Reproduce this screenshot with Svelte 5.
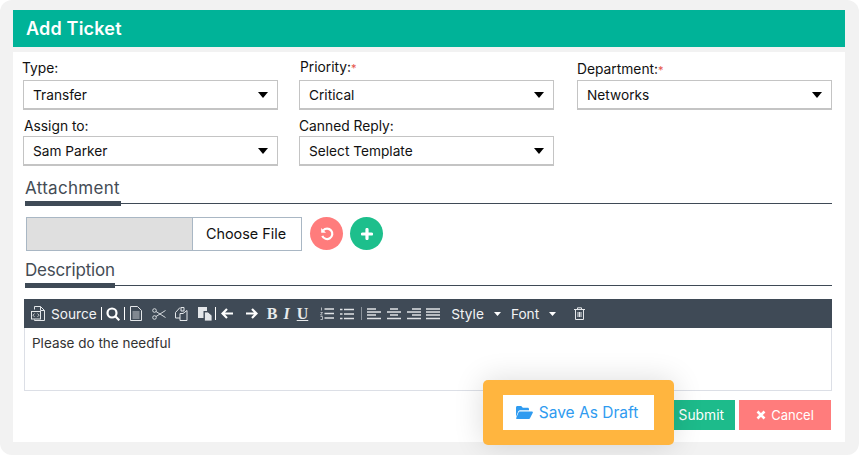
<script lang="ts">
  const topFields = [
    { label: 'Type:', value: 'Transfer', required: false },
    { label: 'Priority:', value: 'Critical', required: true },
    { label: 'Department:', value: 'Networks', required: true },
    { label: 'Assign to:', value: 'Sam Parker', required: false },
    { label: 'Canned Reply:', value: 'Select Template', required: false }
  ];
</script>

<div class="page">
  <div class="card">
    <div class="card-header">Add Ticket</div>
    <div class="card-body">
      <div class="fields">
        {#each topFields as field}
          <div class="field">
            <div class="field-label">{field.label}{#if field.required}<span class="req">*</span>{/if}</div>
            <div class="select">
              <span>{field.value}</span>
              <svg class="caret" width="10" height="6" viewBox="0 0 10 6"><path d="M0 0h10L5 6z" fill="#000" /></svg>
            </div>
          </div>
        {/each}
      </div>

      <div class="section-title first">Attachment<i style="width: 96px"></i></div>
      <div class="attach-row">
        <div class="file-input">
          <div class="file-name"></div>
          <div class="file-btn">Choose File</div>
        </div>
        <div class="round red">
          <svg width="16" height="16" viewBox="0 0 16 16" fill="none" stroke="#fff" stroke-width="2.2">
            <path d="M4.200 4.400a5.200 5.200 0 1 1-.9 5.400" />
            <path d="M2.200 2v4.800H7z" fill="#fff" stroke="none" />
          </svg>
        </div>
        <div class="round green">
          <svg width="12" height="12" viewBox="0 0 12 12"><path d="M6 1.500v9M1.500 6h9" stroke="#fff" stroke-width="3.200" stroke-linecap="round" /></svg>
        </div>
      </div>

      <div class="section-title second">Description<i style="width: 90px"></i></div>

      <div class="editor">
        <div class="toolbar">
          <svg width="14" height="15" viewBox="0 0 14 15" fill="none" stroke="#e4e7ea"><path d="M3.500 3.500v-3h6l4 4v10h-10v-1" /><path d="M9.500 .5v4h4" /><rect x=".5" y="5.500" width="9" height="7.500" /><path d="M3.500 7.500 2 9.200l1.500 1.700M6.500 7.500 8 9.200l-1.500 1.700" stroke-width=".8" /></svg>
          <span class="tb-text source">Source</span>
          <i class="sep"></i>
          <svg width="14" height="14" viewBox="0 0 14 14" fill="none" stroke="#fff" stroke-width="2.200"><circle cx="6" cy="6" r="4.500" /><path d="m9.300 9.300 4 4" /></svg>
          <i class="sep"></i>
          <svg class="doc" width="12" height="15" viewBox="0 0 12 15" fill="none" stroke="#e4e7ea"><path d="M.5.500h7l4 4v10H.5z" /><path d="M2.500 6h7M2.500 8h7M2.500 10h7M2.500 12h7" stroke-width=".8" /></svg>
          <svg class="cut" width="14" height="12" viewBox="0 0 14 12" fill="none" stroke="#d5d9dd"><circle cx="2.500" cy="2.500" r="1.800" /><circle cx="2.500" cy="9.500" r="1.800" /><path d="M4 3.500 13.500 9.500M4 8.500 13.500 2.500" /></svg>
          <svg class="copy" width="13" height="14" viewBox="0 0 13 14" fill="none" stroke="#e4e7ea"><path d="M6 .5h3v3.500H6zM.5 5.500 5 .5M.5 5.500V11H5" /><path d="M5 6.500h3l4-3v10H5z" /></svg>
          <svg class="paste" width="14" height="14" viewBox="0 0 14 14"><path d="M0 0h9v4H5.500v7H0z" fill="#e4e7ea" /><path d="M6.500 5H10l4 3.500V14H6.500z" fill="#e4e7ea" stroke="#3f4a56" stroke-width=".8" /></svg>
          <i class="sep tight"></i>
          <svg class="left" width="12" height="11" viewBox="0 0 12 11" fill="none" stroke="#fff" stroke-width="2.200"><path d="M6 1 1.500 5.500 6 10M2 5.500h10" /></svg>
          <svg class="right" width="12" height="11" viewBox="0 0 12 11" fill="none" stroke="#fff" stroke-width="2.200"><path d="m6 1 4.500 4.500L6 10M10 5.500H0" /></svg>
          <span class="fmt bold">B</span>
          <span class="fmt italic">I</span>
          <span class="fmt under">U</span>
          <svg class="ol" width="14" height="13" viewBox="0 0 14 13" fill="none" stroke="#dfe2e5"><path d="M4.500 2h9.500M4.500 6.500h9.500M4.500 11H14" stroke-width="1.500" /><path d="M1.500 .5v3M.5 5.500h2L.5 8h2M.5 9.500h2v3h-2" stroke-width=".7" /></svg>
          <svg class="ul" width="14" height="12" viewBox="0 0 14 12" fill="none" stroke="#dfe2e5" stroke-width="1.500"><path d="M4 1.500h10M4 6h10M4 10.500h10M0 1.500h2.500M0 6h2.500M0 10.500h2.500" /></svg>
          <i class="sep light"></i>
          <svg width="14" height="12" viewBox="0 0 14 12" stroke="#dfe2e5" stroke-width="1.500"><path d="M0 1h9M0 4h14M0 7h9M0 10.500h14" /></svg>
          <svg class="align" width="14" height="12" viewBox="0 0 14 12" stroke="#dfe2e5" stroke-width="1.500"><path d="M3 1h8M0 4h14M3 7h8M0 10.500h14" /></svg>
          <svg class="align" width="14" height="12" viewBox="0 0 14 12" stroke="#dfe2e5" stroke-width="1.500"><path d="M5 1h9M0 4h14M5 7h9M0 10.500h14" /></svg>
          <svg class="justify" width="14" height="12" viewBox="0 0 14 12" stroke="#dfe2e5" stroke-width="1.500"><path d="M0 1h14M0 4h14M0 7h14M0 10.500h14" /></svg>
          <span class="tb-text style">Style</span>
          <svg class="tb-caret" width="7" height="4" viewBox="0 0 7 4"><path d="M0 0h7L3.500 4z" fill="#fff" /></svg>
          <span class="tb-text font">Font</span>
          <svg class="tb-caret" width="7" height="4" viewBox="0 0 7 4"><path d="M0 0h7L3.500 4z" fill="#fff" /></svg>
          <svg class="trash" width="11" height="13" viewBox="0 0 11 13" fill="none" stroke="#e4e7ea"><path d="M0 2.500h11M3.500 2.500V.8h4v1.700M1.500 2.500V12.500h8V2.500M4 5v5M5.500 5v5M7 5v5" /></svg>
        </div>
        <div class="editor-body">Please do the needful</div>
      </div>

      <div class="actions">
        <div class="btn submit">Submit</div>
        <div class="btn cancel">
          <svg width="10" height="10" viewBox="0 0 10 10"><path d="m1.500 1.500 7 7M8.500 1.500l-7 7" stroke="#fff" stroke-width="2.600" /></svg>
          Cancel
        </div>
      </div>

      <div class="draft-highlight">
        <div class="draft-btn">
          <svg width="17" height="13" viewBox="0 0 17 13" fill="#2f9bf0"><path d="M0 11V1.500C0 .7.600 0 1.400 0h3.800l1.600 1.700h5c.7 0 1.200.6 1.200 1.300v1.200H4.200c-.8 0-1.500.4-1.900 1.100z" /><path d="M3.500 5.500H16c.7 0 1.100.7.800 1.300l-2.700 5.200c-.2.500-.7 1-1.300 1H.8c-.6 0-.9-.6-.6-1.100l2.300-5.300c.2-.6.500-1.100 1-1.100z" /></svg>
          Save As Draft
        </div>
      </div>
    </div>
  </div>
</div>

<style>
  :global(body) {
    margin: 0;
    background: #fff;
  }

  .page {
    box-sizing: border-box;
    width: 859px;
    height: 455px;
    padding: 10px 14px 13px 13px;
    background: #f2f2f2;
    border-radius: 12px;
    font-family: 'Inter', 'Open Sans', sans-serif;
    color: #111;
    overflow: hidden;
  }

  .card {
    height: 100%;
    display: flex;
    flex-direction: column;
  }

  .card-header {
    height: 37px;
    padding-left: 13px;
    background: #00b398;
    color: #fff;
    font-size: 18px;
    font-weight: 600;
    letter-spacing: 0.2px;
    line-height: 37px;
  }

  .card-body {
    position: relative;
    flex: 1;
    margin-top: 5px;
    padding: 0 13px 0 10px;
    background: #fff;
  }

  .fields {
    display: grid;
    grid-template-columns: 276px 278px 255px;
    padding-top: 2px;
  }

  .field {
    width: 255px;
    height: 56px;
    display: flex;
    flex-direction: column;
    justify-content: flex-end;
  }

  .field-label {
    font-size: 13.800px;
    line-height: 20px;
    margin-bottom: 2px;
    margin-left: -1px;
  }

  .field:nth-child(2) .field-label {
    margin-left: 1px;
  }

  .field:nth-child(3) .field-label {
    margin-bottom: 0;
    margin-left: 0;
  }

  .field:nth-child(4) .field-label {
    margin-bottom: 0;
    margin-left: 1px;
  }

  .field:nth-child(5) .field-label {
    margin-bottom: 0;
    margin-left: 0;
  }

  .req {
    color: #e5534b;
    font-size: 11px;
  }

  .select {
    box-sizing: border-box;
    height: 30px;
    display: flex;
    align-items: center;
    justify-content: space-between;
    padding: 0 9px;
    border: 1px solid #c4c4c4;
    border-bottom-width: 2px;
    font-size: 13.700px;
  }

  .section-title {
    position: relative;
    margin-left: 2px;
    height: 26px;
    line-height: 21px;
    border-bottom: 1px solid #3f4a56;
    font-size: 17px;
    color: #444c55;
    box-sizing: border-box;
  }

  .section-title.first {
    margin-top: 12px;
    letter-spacing: 0.3px;
  }

  .section-title.second {
    margin-top: 9px;
    letter-spacing: -0.2px;
  }

  .section-title i {
    position: absolute;
    left: 0;
    bottom: -3px;
    height: 5px;
    background: #3f4a56;
  }

  .attach-row {
    display: flex;
    align-items: flex-start;
    gap: 7px;
    height: 34px;
    margin: 13px 0 0 3px;
  }

  .file-input {
    box-sizing: border-box;
    width: 276px;
    height: 34px;
    display: flex;
    margin-right: 1px;
    border: 1px solid #a9b7c4;
  }

  .file-name {
    width: 165px;
    background: #dfdfdf;
    border-right: 1px solid #a9b7c4;
  }

  .file-btn {
    flex: 1;
    text-align: center;
    font-size: 14.400px;
    line-height: 32px;
    padding-right: 2px;
  }

  .round {
    width: 33px;
    height: 33px;
    border-radius: 50%;
    display: flex;
    align-items: center;
    justify-content: center;
  }

  .round.red {
    background: #ff7c7c;
  }

  .round.green {
    background: #1dbf8c;
  }

  .editor {
    margin: 13px 0 0 1px;
    border: 1px solid #dcdfe6;
    border-top: none;
  }

  .toolbar {
    height: 29px;
    margin: 0 -1px;
    padding-left: 7px;
    display: flex;
    align-items: center;
    background: #3f4a56;
    color: #fff;
  }

  .tb-text {
    font-size: 13.700px;
    color: #f2f3f4;
  }

  .source {
    margin-left: 6px;
  }

  .sep {
    flex: none;
    width: 1px;
    height: 13px;
    margin: 0 4px;
    background: #fff;
  }

  .sep.tight {
    margin: 0 5px 0 3px;
  }

  .sep.light {
    margin: 0 5px 0 7px;
    background: #8c949c;
  }

  .doc {
    margin-left: 1px;
  }

  .cut {
    margin-left: 10px;
  }

  .copy {
    margin-left: 9px;
  }

  .paste {
    margin-left: 10px;
  }

  .right {
    margin-left: 13px;
  }

  .ol {
    margin-left: 12px;
  }

  .ul {
    margin-left: 6px;
  }

  .align {
    margin-left: 6px;
  }

  .justify {
    margin-left: 5px;
  }

  .fmt {
    font-family: 'Liberation Serif', serif;
    font-size: 16px;
    font-weight: 700;
    color: #e8eaec;
  }

  .bold {
    margin-left: 9px;
  }

  .italic {
    font-style: italic;
    margin-left: 6px;
  }

  .under {
    text-decoration: underline;
    margin-left: 7px;
  }

  .style {
    margin-left: 11px;
  }

  .font {
    margin-left: 10px;
  }

  .tb-caret {
    margin-left: 10px;
  }

  .trash {
    margin-left: 18px;
  }

  .editor-body {
    height: 62px;
    padding: 6px 7px;
    box-sizing: border-box;
    font-size: 13.500px;
    line-height: 18px;
    color: #333;
  }

  .actions {
    display: flex;
    justify-content: flex-end;
    gap: 4px;
    margin-top: 9px;
    margin-right: 1px;
  }

  .btn {
    box-sizing: border-box;
    height: 30px;
    display: flex;
    align-items: center;
    color: #fff;
    font-size: 13px;
  }

  .submit {
    width: 85px;
    padding-right: 11px;
    justify-content: flex-end;
    background: #1dbb8b;
    font-size: 13.800px;
  }

  .cancel {
    width: 92px;
    gap: 5px;
    justify-content: center;
    background: #ff7c7c;
  }

  .draft-highlight {
    position: absolute;
    left: 470px;
    top: 328px;
    box-sizing: border-box;
    width: 191px;
    height: 65px;
    padding: 15px 20px;
    background: #ffb53f;
    border-radius: 5px;
    box-shadow: 0 0 30px rgba(0, 0, 0, 0.14);
  }

  .draft-btn {
    height: 35px;
    padding-right: 3px;
    display: flex;
    align-items: center;
    justify-content: center;
    gap: 6px;
    background: #fff;
    color: #2f9bf0;
    font-size: 15.500px;
  }
</style>
